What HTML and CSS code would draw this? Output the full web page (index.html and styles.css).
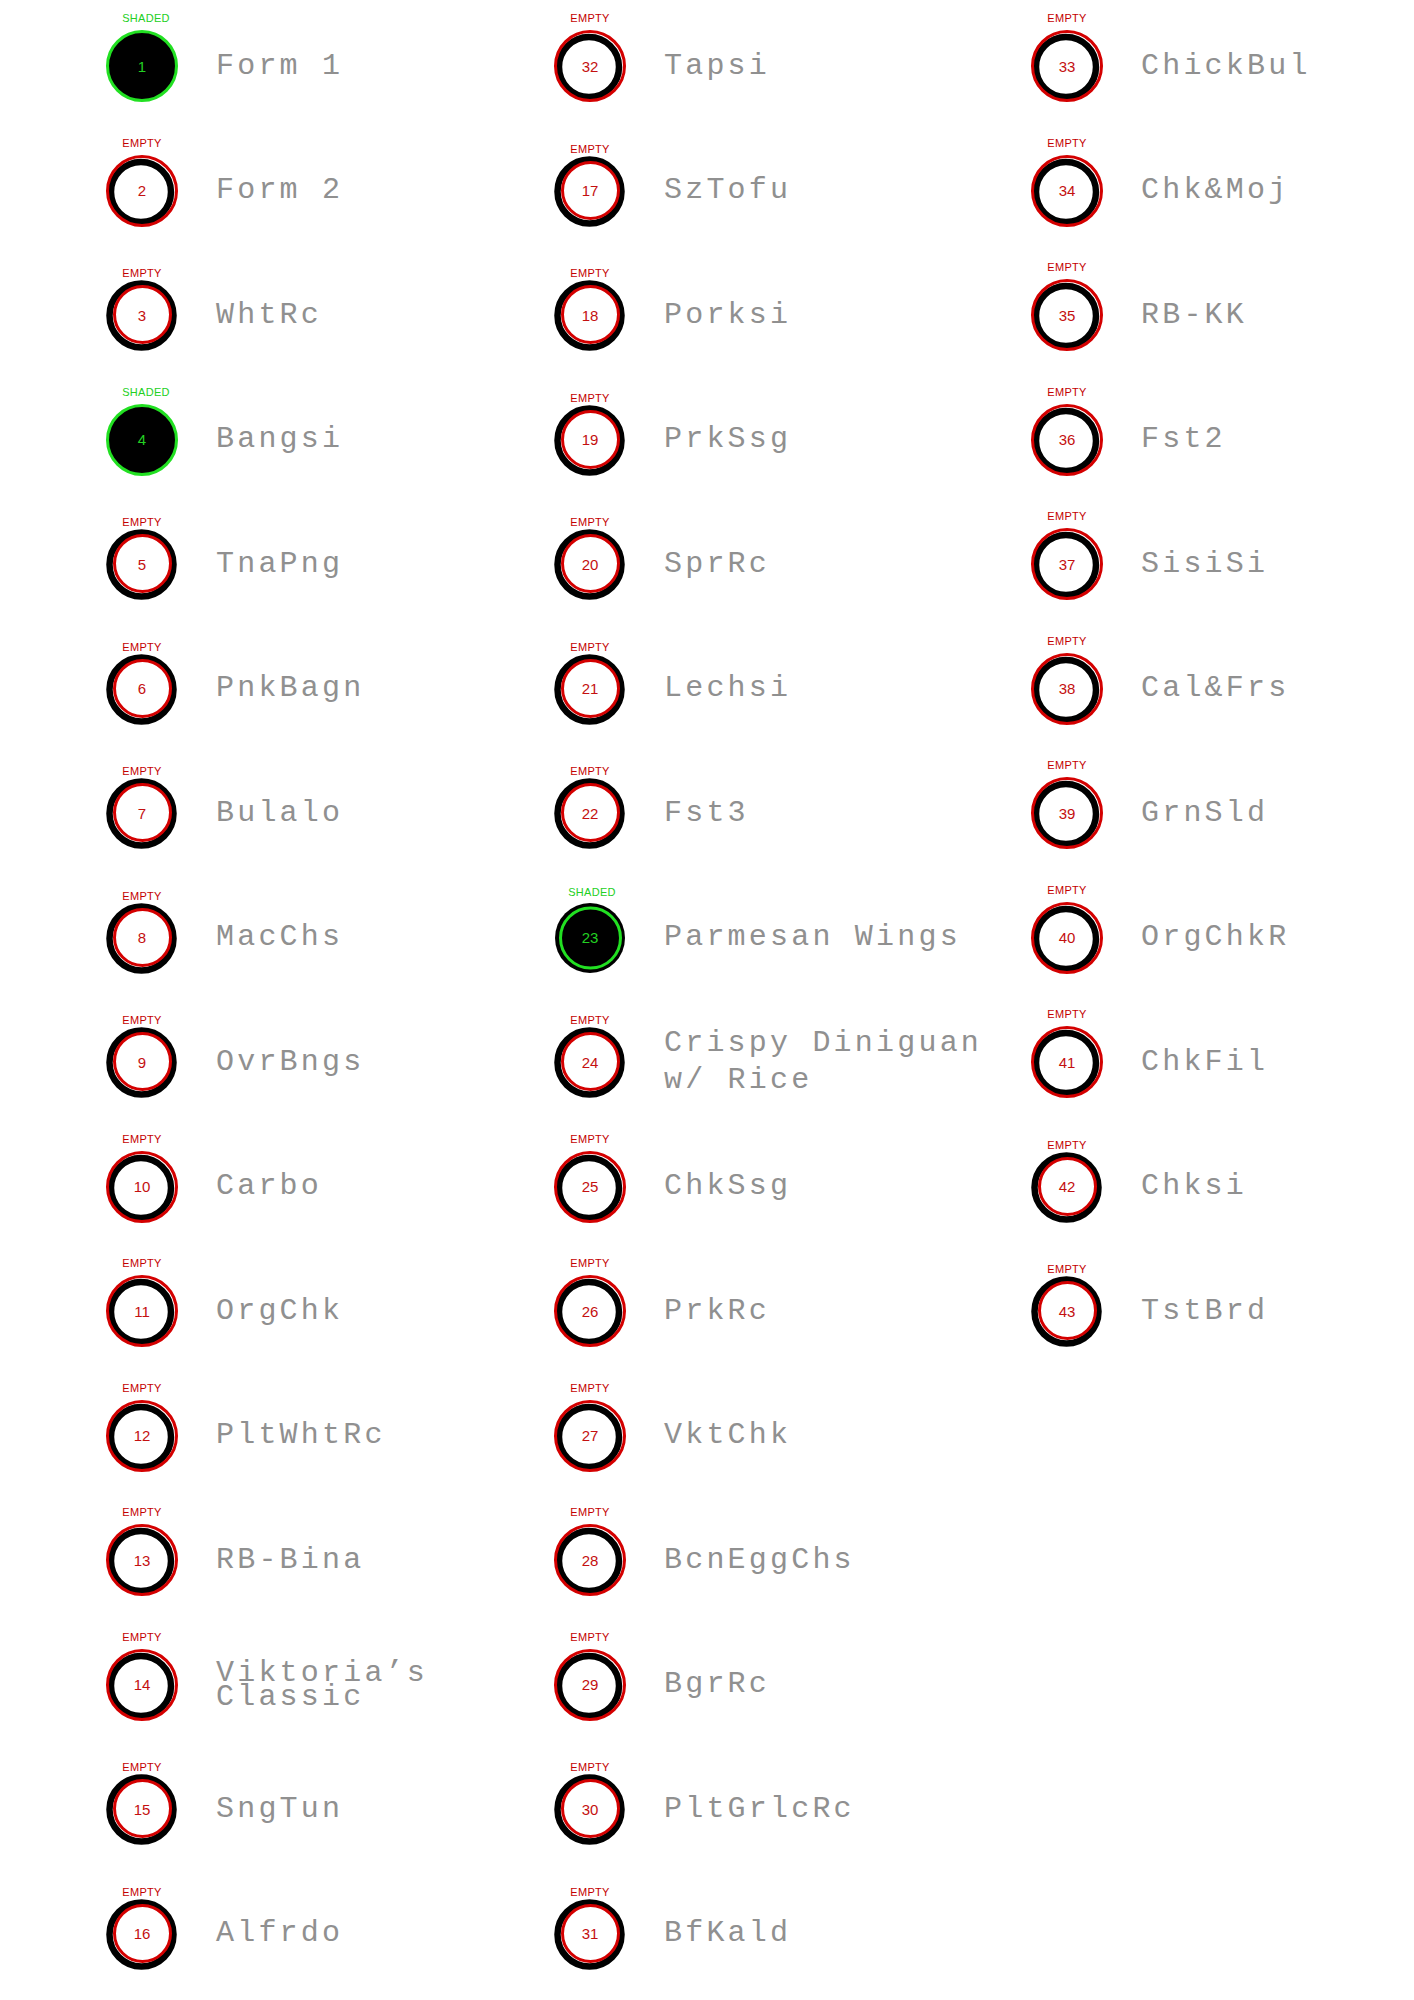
FILE: index.html
```html
<!DOCTYPE html>
<html>
<head>
<meta charset="utf-8">
<link rel="stylesheet" href="styles.css">
</head>
<body>
<svg class="sprite" width="0" height="0" aria-hidden="true">
  <defs>
    <symbol id="ring-a" viewBox="0 0 76 76">
      <circle class="ink" cx="37" cy="39" r="30" stroke-width="6.5" fill="#fff"/>
      <circle class="red" cx="38" cy="38" r="34.5" stroke-width="3" fill="none"/>
    </symbol>
    <symbol id="ring-b" viewBox="0 0 76 76">
      <circle class="ink" cx="37.5" cy="38.5" r="32" stroke-width="6.5" fill="#fff"/>
      <circle class="red" cx="38.5" cy="37.5" r="28" stroke-width="3" fill="none"/>
    </symbol>
    <symbol id="ring-s1" viewBox="0 0 76 76">
      <circle cx="38" cy="38" r="35" fill="#000"/>
      <circle class="green" cx="38" cy="38" r="34.5" stroke-width="3" fill="none"/>
    </symbol>
    <symbol id="ring-s2" viewBox="0 0 76 76">
      <circle cx="38" cy="38" r="35" fill="#000"/>
      <circle class="green" cx="38.5" cy="38" r="30" stroke-width="3" fill="none"/>
    </symbol>
  </defs>
</svg>

<main class="sheet">
  <!-- column 1 -->
  <div class="item"><div class="bubble s1"><span class="tag shaded">SHADED</span><svg class="ring"><use href="#ring-s1"/></svg><span class="num on">1</span></div><div class="name">Form 1</div></div>
  <div class="item"><div class="bubble a"><span class="tag">EMPTY</span><svg class="ring"><use href="#ring-a"/></svg><span class="num">2</span></div><div class="name">Form 2</div></div>
  <div class="item"><div class="bubble b"><span class="tag">EMPTY</span><svg class="ring"><use href="#ring-b"/></svg><span class="num">3</span></div><div class="name">WhtRc</div></div>
  <div class="item"><div class="bubble s1"><span class="tag shaded">SHADED</span><svg class="ring"><use href="#ring-s1"/></svg><span class="num on">4</span></div><div class="name">Bangsi</div></div>
  <div class="item"><div class="bubble b"><span class="tag">EMPTY</span><svg class="ring"><use href="#ring-b"/></svg><span class="num">5</span></div><div class="name">TnaPng</div></div>
  <div class="item"><div class="bubble b"><span class="tag">EMPTY</span><svg class="ring"><use href="#ring-b"/></svg><span class="num">6</span></div><div class="name">PnkBagn</div></div>
  <div class="item"><div class="bubble b"><span class="tag">EMPTY</span><svg class="ring"><use href="#ring-b"/></svg><span class="num">7</span></div><div class="name">Bulalo</div></div>
  <div class="item"><div class="bubble b"><span class="tag">EMPTY</span><svg class="ring"><use href="#ring-b"/></svg><span class="num">8</span></div><div class="name">MacChs</div></div>
  <div class="item"><div class="bubble b"><span class="tag">EMPTY</span><svg class="ring"><use href="#ring-b"/></svg><span class="num">9</span></div><div class="name">OvrBngs</div></div>
  <div class="item"><div class="bubble a"><span class="tag">EMPTY</span><svg class="ring"><use href="#ring-a"/></svg><span class="num">10</span></div><div class="name">Carbo</div></div>
  <div class="item"><div class="bubble a"><span class="tag">EMPTY</span><svg class="ring"><use href="#ring-a"/></svg><span class="num">11</span></div><div class="name">OrgChk</div></div>
  <div class="item"><div class="bubble a"><span class="tag">EMPTY</span><svg class="ring"><use href="#ring-a"/></svg><span class="num">12</span></div><div class="name">PltWhtRc</div></div>
  <div class="item"><div class="bubble a"><span class="tag">EMPTY</span><svg class="ring"><use href="#ring-a"/></svg><span class="num">13</span></div><div class="name">RB-Bina</div></div>
  <div class="item"><div class="bubble a"><span class="tag">EMPTY</span><svg class="ring"><use href="#ring-a"/></svg><span class="num">14</span></div><div class="name tight">Viktoria’s Classic</div></div>
  <div class="item"><div class="bubble b"><span class="tag">EMPTY</span><svg class="ring"><use href="#ring-b"/></svg><span class="num">15</span></div><div class="name">SngTun</div></div>
  <div class="item"><div class="bubble b"><span class="tag">EMPTY</span><svg class="ring"><use href="#ring-b"/></svg><span class="num">16</span></div><div class="name">Alfrdo</div></div>

  <!-- column 2 -->
  <div class="item"><div class="bubble a"><span class="tag">EMPTY</span><svg class="ring"><use href="#ring-a"/></svg><span class="num">32</span></div><div class="name">Tapsi</div></div>
  <div class="item"><div class="bubble b"><span class="tag">EMPTY</span><svg class="ring"><use href="#ring-b"/></svg><span class="num">17</span></div><div class="name">SzTofu</div></div>
  <div class="item"><div class="bubble b"><span class="tag">EMPTY</span><svg class="ring"><use href="#ring-b"/></svg><span class="num">18</span></div><div class="name">Porksi</div></div>
  <div class="item"><div class="bubble b"><span class="tag">EMPTY</span><svg class="ring"><use href="#ring-b"/></svg><span class="num">19</span></div><div class="name">PrkSsg</div></div>
  <div class="item"><div class="bubble b"><span class="tag">EMPTY</span><svg class="ring"><use href="#ring-b"/></svg><span class="num">20</span></div><div class="name">SprRc</div></div>
  <div class="item"><div class="bubble b"><span class="tag">EMPTY</span><svg class="ring"><use href="#ring-b"/></svg><span class="num">21</span></div><div class="name">Lechsi</div></div>
  <div class="item"><div class="bubble b"><span class="tag">EMPTY</span><svg class="ring"><use href="#ring-b"/></svg><span class="num">22</span></div><div class="name">Fst3</div></div>
  <div class="item"><div class="bubble s2"><span class="tag shaded">SHADED</span><svg class="ring"><use href="#ring-s2"/></svg><span class="num on">23</span></div><div class="name">Parmesan Wings</div></div>
  <div class="item"><div class="bubble b"><span class="tag">EMPTY</span><svg class="ring"><use href="#ring-b"/></svg><span class="num">24</span></div><div class="name loose">Crispy Diniguan w/ Rice</div></div>
  <div class="item"><div class="bubble a"><span class="tag">EMPTY</span><svg class="ring"><use href="#ring-a"/></svg><span class="num">25</span></div><div class="name">ChkSsg</div></div>
  <div class="item"><div class="bubble a"><span class="tag">EMPTY</span><svg class="ring"><use href="#ring-a"/></svg><span class="num">26</span></div><div class="name">PrkRc</div></div>
  <div class="item"><div class="bubble a"><span class="tag">EMPTY</span><svg class="ring"><use href="#ring-a"/></svg><span class="num">27</span></div><div class="name">VktChk</div></div>
  <div class="item"><div class="bubble a"><span class="tag">EMPTY</span><svg class="ring"><use href="#ring-a"/></svg><span class="num">28</span></div><div class="name">BcnEggChs</div></div>
  <div class="item"><div class="bubble a"><span class="tag">EMPTY</span><svg class="ring"><use href="#ring-a"/></svg><span class="num">29</span></div><div class="name">BgrRc</div></div>
  <div class="item"><div class="bubble b"><span class="tag">EMPTY</span><svg class="ring"><use href="#ring-b"/></svg><span class="num">30</span></div><div class="name">PltGrlcRc</div></div>
  <div class="item"><div class="bubble b"><span class="tag">EMPTY</span><svg class="ring"><use href="#ring-b"/></svg><span class="num">31</span></div><div class="name">BfKald</div></div>

  <!-- column 3 -->
  <div class="item"><div class="bubble a"><span class="tag">EMPTY</span><svg class="ring"><use href="#ring-a"/></svg><span class="num">33</span></div><div class="name">ChickBul</div></div>
  <div class="item"><div class="bubble a"><span class="tag">EMPTY</span><svg class="ring"><use href="#ring-a"/></svg><span class="num">34</span></div><div class="name">Chk&amp;Moj</div></div>
  <div class="item"><div class="bubble a"><span class="tag">EMPTY</span><svg class="ring"><use href="#ring-a"/></svg><span class="num">35</span></div><div class="name">RB-KK</div></div>
  <div class="item"><div class="bubble a"><span class="tag">EMPTY</span><svg class="ring"><use href="#ring-a"/></svg><span class="num">36</span></div><div class="name">Fst2</div></div>
  <div class="item"><div class="bubble a"><span class="tag">EMPTY</span><svg class="ring"><use href="#ring-a"/></svg><span class="num">37</span></div><div class="name">SisiSi</div></div>
  <div class="item"><div class="bubble a"><span class="tag">EMPTY</span><svg class="ring"><use href="#ring-a"/></svg><span class="num">38</span></div><div class="name">Cal&amp;Frs</div></div>
  <div class="item"><div class="bubble a"><span class="tag">EMPTY</span><svg class="ring"><use href="#ring-a"/></svg><span class="num">39</span></div><div class="name">GrnSld</div></div>
  <div class="item"><div class="bubble a"><span class="tag">EMPTY</span><svg class="ring"><use href="#ring-a"/></svg><span class="num">40</span></div><div class="name">OrgChkR</div></div>
  <div class="item"><div class="bubble a"><span class="tag">EMPTY</span><svg class="ring"><use href="#ring-a"/></svg><span class="num">41</span></div><div class="name">ChkFil</div></div>
  <div class="item"><div class="bubble b"><span class="tag">EMPTY</span><svg class="ring"><use href="#ring-b"/></svg><span class="num">42</span></div><div class="name">Chksi</div></div>
  <div class="item"><div class="bubble b"><span class="tag">EMPTY</span><svg class="ring"><use href="#ring-b"/></svg><span class="num">43</span></div><div class="name">TstBrd</div></div>
</main>
</body>
</html>
```

FILE: styles.css
```css
html, body {
  margin: 0;
  padding: 0;
  background: #fff;
}

.sprite {
  position: absolute;
  width: 0;
  height: 0;
  overflow: hidden;
}

.ink { stroke: #000; }
.red { stroke: #d40000; }
.green { stroke: #22e022; }

.sheet {
  display: grid;
  grid-template-columns: 448px 477px 1fr;
  grid-template-rows: repeat(16, 124.5px);
  grid-auto-flow: column;
  padding: 4px 0 0 104px;
}

.item {
  display: flex;
  align-items: center;
  gap: 36px;
  min-width: 0;
}

.bubble {
  position: relative;
  flex: 0 0 76px;
  width: 76px;
  height: 76px;
}

.ring {
  display: block;
  width: 76px;
  height: 76px;
}

.tag {
  position: absolute;
  left: 50%;
  bottom: calc(100% + 4px);
  transform: translateX(-50%);
  font-family: "Liberation Sans", Arial, sans-serif;
  font-size: 11px;
  line-height: 11px;
  letter-spacing: 0.3px;
  color: #c40000;
  white-space: nowrap;
}

.bubble.b .tag { bottom: calc(100% - 2px); }
.bubble.s1 .tag { left: calc(50% + 4px); }
.bubble.s2 .tag { bottom: calc(100% + 2px); left: calc(50% + 2px); }
.tag.shaded { color: #22d022; }

.num {
  position: absolute;
  inset: 0;
  display: flex;
  align-items: center;
  justify-content: center;
  font-family: "Liberation Sans", Arial, sans-serif;
  font-size: 15px;
  line-height: 1;
  color: #c41010;
}

.num.on { color: #22d022; }

.name {
  font-family: "Liberation Mono", "Courier New", monospace;
  font-size: 30px;
  letter-spacing: 3.2px;
  line-height: 37px;
  color: #909090;
}

.name.tight { line-height: 24px; }
.name.loose { line-height: 37px; }
```
